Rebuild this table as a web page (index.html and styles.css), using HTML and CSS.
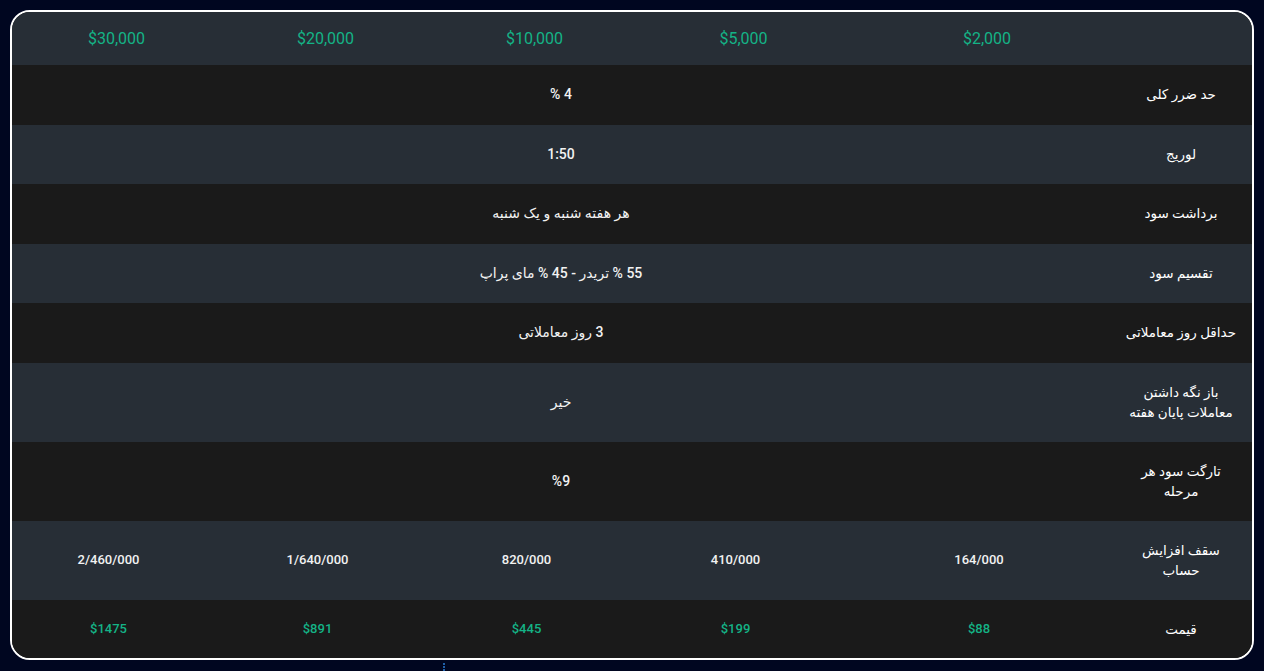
FILE: index.html
```html
<!DOCTYPE html>
<html lang="fa">
<head>
<meta charset="utf-8">
<title>Plans</title>
<link rel="stylesheet" href="styles.css">
</head>
<body>
<div class="table">
  <div class="row head">
    <div class="cell"></div>
    <div class="cell">$2,000</div>
    <div class="cell">$5,000</div>
    <div class="cell">$10,000</div>
    <div class="cell">$20,000</div>
    <div class="cell">$30,000</div>
  </div>
  <div class="row dark">
    <div class="cell label">حد ضرر کلی</div>
    <div class="cell wide">4 %</div>
  </div>
  <div class="row light">
    <div class="cell label">لوریج</div>
    <div class="cell wide">1:50</div>
  </div>
  <div class="row dark">
    <div class="cell label">برداشت سود</div>
    <div class="cell wide">هر هفته شنبه و یک شنبه</div>
  </div>
  <div class="row light">
    <div class="cell label">تقسیم سود</div>
    <div class="cell wide">55 % تریدر - 45 % مای پراپ</div>
  </div>
  <div class="row dark">
    <div class="cell label">حداقل روز معاملاتی</div>
    <div class="cell wide">3 روز معاملاتی</div>
  </div>
  <div class="row light tall">
    <div class="cell label">باز نگه داشتن<br>معاملات پایان هفته</div>
    <div class="cell wide">خیر</div>
  </div>
  <div class="row dark tall">
    <div class="cell label">تارگت سود هر<br>مرحله</div>
    <div class="cell wide">%9</div>
  </div>
  <div class="row light tall">
    <div class="cell label">سقف افزایش<br>حساب</div>
    <div class="cell num">164/000</div>
    <div class="cell num">410/000</div>
    <div class="cell num">820/000</div>
    <div class="cell num">1/640/000</div>
    <div class="cell num">2/460/000</div>
  </div>
  <div class="row dark last">
    <div class="cell label">قیمت</div>
    <div class="cell num price">$88</div>
    <div class="cell num price">$199</div>
    <div class="cell num price">$445</div>
    <div class="cell num price">$891</div>
    <div class="cell num price">$1475</div>
  </div>
</div>
<div class="dots"></div>
</body>
</html>
```

FILE: styles.css
```css
html, body {
  margin: 0;
  padding: 0;
  background: #000620;
}
body {
  padding: 10px;
  position: relative;
  height: 671px;
  box-sizing: border-box;
  font-family: Roboto, "DejaVu Sans", sans-serif;
}
.table {
  direction: rtl;
  border: 2px solid #ffffff;
  border-radius: 20px;
  overflow: hidden;
  background: #1a1a1a;
}
.row {
  display: grid;
  grid-template-columns: 126px 278px 209px 209px 209px 209px;
  align-items: center;
}
.head { background: #272e36; }
.light { background: #272e36; }
.dark { background: #1a1a1a; }
.cell {
  text-align: center;
  color: #f2f2f2;
  font-size: 13px;
  font-weight: 500;
  line-height: 20px;
  padding: 19px 16px 20.5px 0;
}
.wide {
  grid-column: 2 / -1;
  font-size: 14px;
}
.tall .cell { padding-top: 19px; padding-bottom: 20px; }
.head .cell {
  padding: 16.5px 0;
  color: #14b386;
  font-size: 16px;
  font-weight: 400;
}
.label {
  font-size: 13.5px;
  font-weight: 500;
  color: #ffffff;
  white-space: nowrap;
}
.price {
  color: #14b386;
}
.last .cell { padding-top: 19px; padding-bottom: 19.5px; }
.dots {
  position: absolute;
  left: 443px;
  top: 663px;
  width: 0;
  height: 8px;
  border-left: 2px dotted #1f5fa8;
}
```
